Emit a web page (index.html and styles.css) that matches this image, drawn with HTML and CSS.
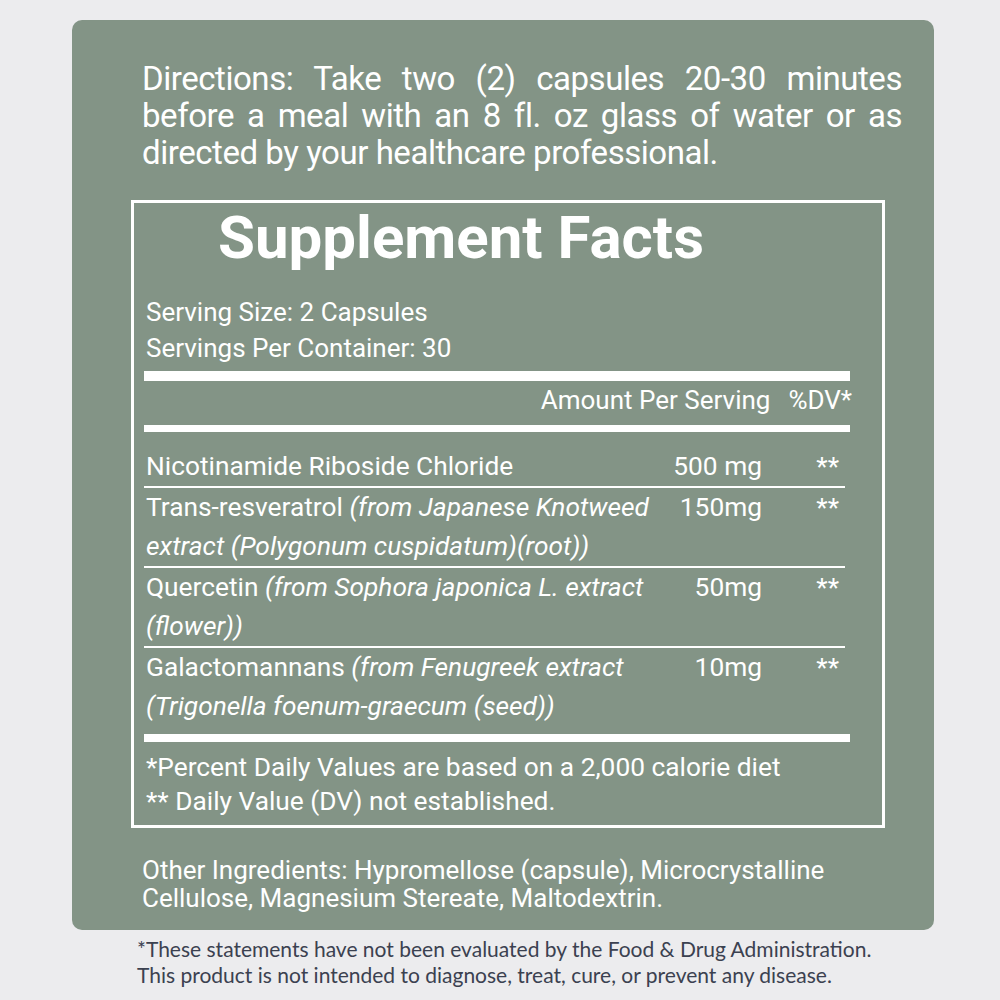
FILE: index.html
```html
<!DOCTYPE html>
<html lang="en">
<head>
<meta charset="utf-8">
<title>Supplement Facts</title>
<link rel="stylesheet" href="styles.css">
</head>
<body>
<main class="panel">
  <div class="directions">
    <span class="jline">Directions: Take two (2) capsules 20-30 minutes</span>
    <span class="jline">before a meal with an 8 fl. oz glass of water or as</span>
    <span class="lastline">directed by your healthcare professional.</span>
  </div>

  <section class="facts">
    <h1 class="facts-title">Supplement Facts</h1>
    <div class="serving">
      <div>Serving Size: 2 Capsules</div>
      <div>Servings Per Container: 30</div>
    </div>
    <div class="bar bar-thick"></div>
    <div class="head-row">
      <span class="head-amount">Amount Per Serving</span>
      <span class="head-dv">%DV*</span>
    </div>
    <div class="bar bar-mid"></div>

    <div class="rows">
      <div class="row row-single">
        <div class="name">Nicotinamide Riboside Chloride</div>
        <div class="amount">500 mg</div>
        <div class="dv">**</div>
      </div>
      <div class="row">
        <div class="name">Trans-resveratrol <em>(from Japanese Knotweed<br>extract (Polygonum cuspidatum)(root))</em></div>
        <div class="amount">150mg</div>
        <div class="dv">**</div>
      </div>
      <div class="row">
        <div class="name">Quercetin <em>(from Sophora japonica L. extract<br>(flower))</em></div>
        <div class="amount">50mg</div>
        <div class="dv">**</div>
      </div>
      <div class="row row-last">
        <div class="name">Galactomannans <em>(from Fenugreek extract<br>(Trigonella foenum-graecum (seed))</em></div>
        <div class="amount">10mg</div>
        <div class="dv">**</div>
      </div>
    </div>

    <div class="bar bar-bottom"></div>
    <div class="notes">
      <div>*Percent Daily Values are based on a 2,000 calorie diet</div>
      <div>** Daily Value (DV) not established.</div>
    </div>
  </section>

  <p class="other">Other Ingredients: Hypromellose (capsule), Microcrystalline<br>Cellulose, Magnesium Stereate, Maltodextrin.</p>
</main>

<footer class="disclaimer">
  <div>*These statements have not been evaluated by the Food &amp; Drug Administration.</div>
  <div>This product is not intended to diagnose, treat, cure, or prevent any disease.</div>
</footer>
</body>
</html>
```

FILE: styles.css
```css
* { box-sizing: border-box; }

html, body {
  margin: 0;
  padding: 0;
}

body {
  width: 1000px;
  height: 1000px;
  background: #ececee;
  font-family: Roboto, "Liberation Sans", sans-serif;
  color: #ffffff;
  overflow: hidden;
}

.panel {
  margin: 20px 0 0 72px;
  width: 862px;
  height: 910px;
  background: #839486;
  border-radius: 10px;
  padding-top: 40px;
  display: flex;
  flex-direction: column;
}

.directions {
  margin: 0 32px 0 70px;
  font-size: 33px;
  line-height: 37px;
  letter-spacing: -0.45px;
  font-stretch: 90%;
}

.jline {
  display: block;
  text-align: justify;
  text-align-last: justify;
}

.lastline {
  display: block;
}

.facts {
  margin: 29px 49px 0 59px;
  border: 3px solid #ffffff;
  height: 628px;
  display: flex;
  flex-direction: column;
}

.facts-title {
  margin: 4px 0 0 84px;
  font-size: 60px;
  line-height: 62px;
  font-weight: 700;
  letter-spacing: 0;
}

.serving {
  margin: 25px 0 0 12px;
  font-size: 26px;
  line-height: 36px;
}

.bar {
  background: #ffffff;
  margin-left: 10px;
  margin-right: 32px;
}

.bar-thick {
  height: 10px;
  margin-top: 5px;
}

.head-row {
  display: flex;
  justify-content: flex-end;
  gap: 18px;
  margin-right: 30px;
  height: 44px;
  padding-bottom: 6px;
  align-items: center;
  font-size: 26px;
}

.bar-mid {
  height: 7px;
}

.rows {
  margin-left: 10px;
  margin-right: 37px;
  font-size: 26.3px;
}

.row {
  display: grid;
  grid-template-columns: 1fr 110px 83px;
  line-height: 39px;
  padding: 0 0 0 2px;
  border-bottom: 2px solid #ffffff;
}

.row-single {
  padding-top: 15px;
}

.row-last {
  border-bottom: none;
  padding-bottom: 8px;
}

.name em {
  font-style: italic;
}

.amount {
  text-align: right;
}

.dv {
  text-align: right;
  padding-right: 6px;
}

.bar-bottom {
  height: 8px;
}

.notes {
  margin: 8px 0 0 12px;
  font-size: 26.3px;
  line-height: 34px;
}

.other {
  margin: 28px 0 0 70px;
  font-size: 26px;
  line-height: 28px;
}

.disclaimer {
  margin: 6px 0 0 137px;
  font-family: Lato, "Noto Sans", sans-serif;
  font-size: 21px;
  line-height: 26px;
  color: #3b4150;
}
```
